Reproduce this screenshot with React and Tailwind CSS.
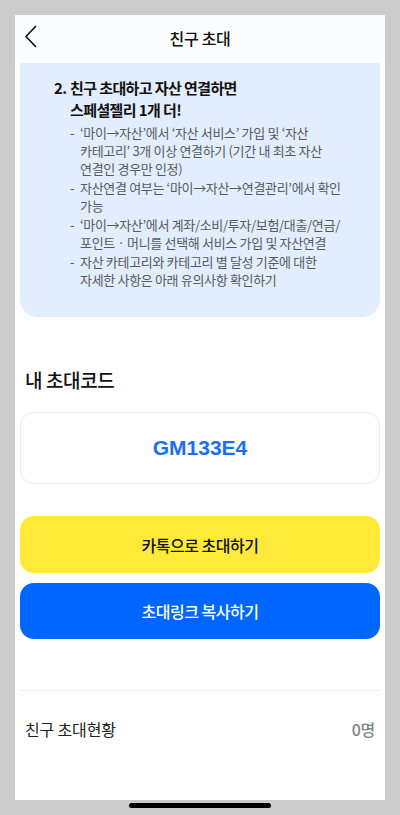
import { useState } from "react";

const bullets = [
  ["‘마이→자산’에서 ‘자산 서비스’ 가입 및 ‘자산", "카테고리’ 3개 이상 연결하기 (기간 내 최초 자산", "연결인 경우만 인정)"],
  ["자산연결 여부는 ‘마이→자산→연결관리’에서 확인", "가능"],
  ["‘마이→자산’에서 계좌/소비/투자/보험/대출/연금/", "포인트 · 머니를 선택해 서비스 가입 및 자산연결"],
  ["자산 카테고리와 카테고리 별 달성 기준에 대한", "자세한 사항은 아래 유의사항 확인하기"],
];

function App() {
  const [count] = useState(0);

  return (
    <div
      className="w-[400px] h-[815px] bg-[#cccccc] px-[15px] pt-[15px] flex flex-col"
      style={{ fontFamily: '"Noto Sans CJK KR", "Noto Sans", sans-serif' }}
    >
      <div className="h-[785px] bg-white flex flex-col">
        {/* Header */}
        <div className="relative h-[48px] shrink-0 bg-[#fbfcfe] flex items-center justify-center">
          <button className="absolute left-[6px] top-[10px] w-[24px] h-[24px] flex items-center justify-center">
            <svg viewBox="0 0 24 24" className="w-[24px] h-[24px]" fill="none" stroke="#111" strokeWidth="1.7">
              <path d="M14.5 1.5 L5 11.5 L14.5 21.5" strokeLinecap="round" strokeLinejoin="round" />
            </svg>
          </button>
          <h1 className="text-[16px] font-medium text-[#111] tracking-[-0.02em] mt-[-2px]">친구 초대</h1>
        </div>

        <div className="px-[5px] flex flex-col">
          {/* Event card */}
          <div className="bg-[#e2edfd] rounded-b-[18px] pl-[34px] pr-[20px] pt-[14px] pb-[28px]">
            <div className="flex text-[15px] font-bold text-[#111] leading-[22px] tracking-[-0.04em]">
              <span className="w-[16px] shrink-0">2.</span>
              <span className="whitespace-nowrap">
                친구 초대하고 자산 연결하면
                <br />
                스페셜젤리 1개 더!
              </span>
            </div>
            <ul className="mt-[3px] pl-[16px] flex flex-col gap-[1px] text-[13px] leading-[18px] text-[#555a61] tracking-[-0.025em]">
              {bullets.map((lines, i) => (
                <li key={i} className="flex">
                  <span className="w-[10px] shrink-0">-</span>
                  <span className="whitespace-nowrap">
                    {lines.map((l, j) => (
                      <span key={j} className="block">
                        {l}
                      </span>
                    ))}
                  </span>
                </li>
              ))}
            </ul>
          </div>

          {/* My code */}
          <h2 className="mt-[50px] pl-[5px] text-[19px] font-medium text-[#111] leading-[26px] tracking-[-0.02em]">
            내 초대코드
          </h2>
          <div className="mt-[19px] h-[72px] rounded-[14px] border border-[#ececec] flex items-center justify-center">
            <span
              className="text-[21px] font-bold text-[#1a6ff5]"
              style={{ fontFamily: '"Liberation Sans", Arial, sans-serif' }}
            >
              GM133E4
            </span>
          </div>

          <button className="mt-[32px] h-[57px] rounded-[14px] bg-[#ffea3a] text-[16px] font-medium text-[#111] tracking-[-0.03em]">
            카톡으로 초대하기
          </button>
          <button className="mt-[10px] h-[56px] rounded-[14px] bg-[#0066ff] text-[16px] font-medium text-white tracking-[-0.03em]">
            초대링크 복사하기
          </button>

          <div className="mt-[51px] h-px bg-[#f1f1f1]" />

          <div className="flex items-center justify-between h-[76px] px-[5px]">
            <span className="text-[16px] text-[#222] tracking-[-0.01em]">친구 초대현황</span>
            <span className="text-[16px] font-medium text-[#80848b] tracking-[-0.02em]">{count}명</span>
          </div>
        </div>
      </div>

      {/* Home indicator */}
      <div className="flex justify-center pt-[3px]">
        <div className="w-[142px] h-[5px] rounded-full bg-black" />
      </div>
    </div>
  );
}

export default App;
